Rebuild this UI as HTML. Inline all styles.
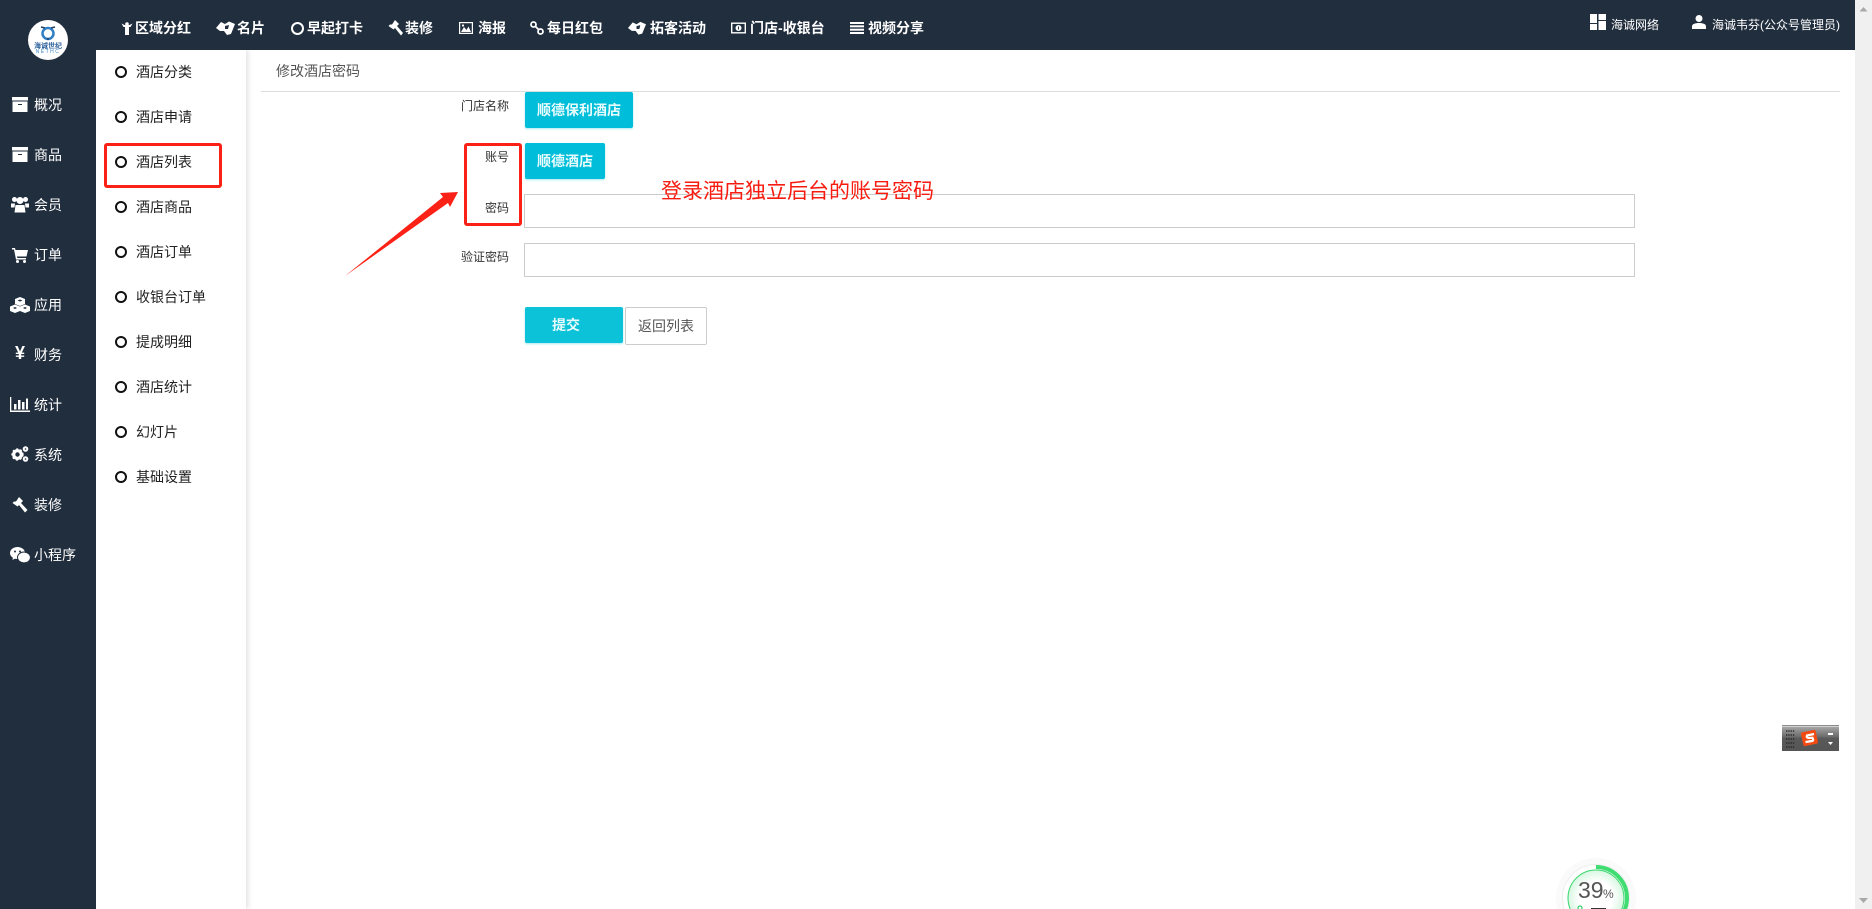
<!DOCTYPE html>
<html lang="zh-CN">
<head>
<meta charset="utf-8">
<title>修改酒店密码</title>
<style>
html,body{margin:0;padding:0;width:1872px;height:909px;overflow:hidden;background:#fff;font-family:"Liberation Sans","Noto Sans CJK SC",sans-serif;}
#p{position:relative;width:1872px;height:909px;overflow:hidden;background:#fff;}
#p>*{position:absolute;}
.t{white-space:nowrap;line-height:20px;height:20px;font-size:14px;}
.w{color:#fff;}
.b{font-weight:700;color:#fff;}
.c{width:8px;height:8px;border:2px solid #111;border-radius:50%;left:115px;}
.d{color:#222;left:136px;}
.l{color:#333;font-size:12px;text-align:right;width:80px;left:429px;}
.i{border:1px solid #ccc;background:#fff;box-sizing:border-box;left:524px;width:1111px;}
.btn{background:#00bed9;border-radius:2px;box-shadow:0 1px 2px rgba(0,190,217,.35);}
svg{display:block;overflow:visible;}
</style>
</head>
<body>
<div id="p">
<div style="left:96px;top:50px;width:150px;height:859px;background:#fff;box-shadow:2px 0 5px rgba(0,0,0,.12)"></div>
<div style="left:0;top:0;width:96px;height:909px;background:#212e3e"></div>
<div style="left:0;top:0;width:1855px;height:50px;background:#212e3e"></div>
<div style="left:1855px;top:0;width:17px;height:909px;background:#f0f0f0"></div>
<svg style="left:1855px;top:0" width="17" height="909"><path d="M4.500 11.500L8.500 7L12.500 11.500Z" fill="#a8a8a8"/><path d="M4 898H13L8.500 903Z" fill="#a8a8a8"/></svg>

<!-- logo -->
<div style="left:28px;top:20px;width:40px;height:40px;border-radius:50%;background:#fff"></div>
<svg style="left:39px;top:25px" width="18" height="16" viewBox="0 0 18 16"><circle cx="9" cy="8.500" r="5.500" fill="none" stroke="#2f7fc4" stroke-width="2.500"/><path d="M2 2L6 3M16 2L12 3M9 15V13" stroke="#1d3f66" stroke-width="1.500"/></svg>
<div class="t" style="left:33px;top:43px;width:30px;text-align:center;font-size:7px;line-height:8px;height:8px;color:#2a5f9a;font-weight:700">海诚世纪</div>
<div class="t" style="left:33px;top:49px;width:30px;text-align:center;font-size:5px;line-height:6px;height:6px;letter-spacing:1.500px;color:#3d86c8">NETHC</div>

<!-- top nav icons -->
<svg style="left:121px;top:22px" width="12" height="13" viewBox="0 0 12 13" fill="#fff"><path d="M0.500 1.500L3.500 3H8.500L11.500 1.500L9.500 5H8V13H4V5H2.500Z"/><circle cx="6" cy="2" r="1.800"/></svg>
<svg style="left:216px;top:21px" width="19" height="14" viewBox="0 0 19 14" fill="#fff"><path d="M0 7L5 1L9 3L13 0.500L19 3L15 13L11 14L8 10L4 10Z"/><path d="M9 5L13 4L12 8L9 8Z" fill="#212e3e"/></svg>
<div style="left:291px;top:22px;width:8px;height:8px;border:2px solid #fff;border-radius:50%;padding:0 1px 1px 0"></div>
<svg style="left:388px;top:20px" width="16" height="16" viewBox="0 0 16 16" fill="#fff"><path d="M7 0L11 4L9 6L15 13L13 15.500L7 8L5.500 9.500L0.500 6L2 4.500L4 4.500Z"/></svg>
<svg style="left:459px;top:22px" width="14" height="12" viewBox="0 0 14 12"><rect x=".6" y=".6" width="12.800" height="10.800" fill="none" stroke="#fff" stroke-width="1.200"/><path d="M2 10L5 5L7.500 8L9.500 4.500L12 10Z" fill="#fff"/><circle cx="4" cy="3.500" r="1.100" fill="#fff"/></svg>
<svg style="left:530px;top:21px" width="14" height="14" viewBox="0 0 14 14" fill="none" stroke="#fff" stroke-width="1.800"><circle cx="3.500" cy="3.500" r="2.500"/><circle cx="10.500" cy="10.500" r="2.500"/><path d="M5 5L9 9"/></svg>
<svg style="left:628px;top:21px" width="18" height="14" viewBox="0 0 19 14" fill="#fff"><path d="M0 7L5 1L9 3L13 0.500L19 3L15 13L11 14L8 10L4 10Z"/><path d="M9 5L13 4L12 8L9 8Z" fill="#212e3e"/></svg>
<svg style="left:731px;top:22px" width="15" height="12" viewBox="0 0 15 12"><rect x=".7" y="1.200" width="13.600" height="9.600" fill="none" stroke="#fff" stroke-width="1.400"/><circle cx="7.500" cy="6" r="3" fill="#fff"/><rect x="7" y="4.500" width="1" height="3" fill="#212e3e"/></svg>
<svg style="left:850px;top:22px" width="14" height="12" viewBox="0 0 14 12" fill="#fff"><rect y="0" width="14" height="2"/><rect y="3.300" width="14" height="2"/><rect y="6.700" width="14" height="2"/><rect y="10" width="14" height="2"/></svg>

<div class="t b" style="left:135px;top:18px">区域分红</div>
<div class="t b" style="left:237px;top:18px">名片</div>
<div class="t b" style="left:307px;top:18px">早起打卡</div>
<div class="t b" style="left:405px;top:18px">装修</div>
<div class="t b" style="left:478px;top:18px">海报</div>
<div class="t b" style="left:547px;top:18px">每日红包</div>
<div class="t b" style="left:650px;top:18px">拓客活动</div>
<div class="t b" style="left:750px;top:18px">门店-收银台</div>
<div class="t b" style="left:868px;top:18px">视频分享</div>

<!-- top right -->
<svg style="left:1590px;top:14px" width="16" height="16" viewBox="0 0 16 16" fill="#fff"><rect width="7" height="9"/><rect y="10" width="7" height="6"/><rect x="8.500" width="7.500" height="6"/><rect x="8.500" y="7" width="7.500" height="9"/></svg>
<svg style="left:1692px;top:15px" width="14" height="14" viewBox="0 0 14 14" fill="#fff"><circle cx="7" cy="3.500" r="3.500"/><path d="M0 14V11.500C0 9 3 8 7 8C11 8 14 9 14 11.500V14Z"/></svg>
<div class="t w" style="left:1611px;top:15px;font-size:12px">海诚网络</div>
<div class="t w" style="left:1712px;top:15px;font-size:12px">海诚韦芬(公众号管理员)</div>

<!-- left nav icons -->
<svg style="left:12px;top:97px" width="16" height="15" viewBox="0 0 16 15" fill="#fff"><rect width="16" height="3.500"/><path d="M0.500 4.500H15.500V15H0.500ZM6 7V8H10V7Z" fill-rule="evenodd"/></svg>
<svg style="left:12px;top:147px" width="16" height="15" viewBox="0 0 16 15" fill="#fff"><rect width="16" height="3.500"/><path d="M0.500 4.500H15.500V15H0.500ZM6 7V8H10V7Z" fill-rule="evenodd"/></svg>
<svg style="left:11px;top:196px" width="18" height="17" viewBox="0 0 18 17" fill="#fff"><circle cx="3.500" cy="3.500" r="2.500"/><circle cx="14.500" cy="3.500" r="2.500"/><circle cx="9" cy="4.500" r="3.500"/><path d="M0 7.500H4L3.500 11.500H0ZM14 7.500H18V11.500H14.500Z"/><path d="M4.500 9H13.500L14.500 16.500H3.500Z"/></svg>
<svg style="left:12px;top:248px" width="16" height="15" viewBox="0 0 16 15" fill="#fff"><path d="M0 0H3L3.500 2H16L14.500 8.500H5L5.300 10H14V11.500H4L2 1.500H0Z"/><circle cx="5.500" cy="13.500" r="1.500"/><circle cx="12.500" cy="13.500" r="1.500"/></svg>
<svg style="left:10px;top:297px" width="20" height="16" viewBox="0 0 20 16" fill="#fff"><path d="M10 0L15 2V7L10 9L5 7V2Z"/><path d="M5 7.500L10 9.500V14L5 16L0 14V9.500Z"/><path d="M15 7.500L20 9.500V14L15 16L10 14V9.500Z"/><path d="M10 2.500L12.500 3.500L10 4.500L7.500 3.500ZM5 10L7 11L5 12L3 11ZM15 10L17 11L15 12L13 11Z" fill="#212e3e"/></svg>
<div class="t" style="left:10px;top:343px;font-size:18px;font-weight:700;color:#fff;width:20px;text-align:center;line-height:20px">¥</div>
<svg style="left:10px;top:397px" width="20" height="15" viewBox="0 0 20 15" fill="#fff"><rect y="0" width="1.300" height="15"/><rect y="13.500" width="20" height="1.500"/><rect x="4" y="7" width="2.500" height="5.500"/><rect x="8" y="3" width="2.500" height="9.500"/><rect x="12" y="5" width="2.500" height="7.500"/><rect x="16" y="1.500" width="2" height="11"/></svg>
<svg style="left:11px;top:446px" width="18" height="16" viewBox="0 0 18 16"><circle cx="6.500" cy="8.500" r="3.800" fill="none" stroke="#fff" stroke-width="3.200"/><circle cx="6.500" cy="8.500" r="5.400" fill="none" stroke="#fff" stroke-width="1.500" stroke-dasharray="2 2"/><circle cx="14.500" cy="3" r="1.800" fill="none" stroke="#fff" stroke-width="2"/><circle cx="14.500" cy="13" r="1.800" fill="none" stroke="#fff" stroke-width="2"/></svg>
<svg style="left:12px;top:497px" width="16" height="16" viewBox="0 0 16 16" fill="#fff"><path d="M7 0L11 4L9 6L15.500 13L13 15.500L7 8L5.500 9.500L0.500 6L2 4.500L4 4.500Z"/></svg>
<svg style="left:10px;top:547px" width="20" height="16" viewBox="0 0 20 16" fill="#fff"><ellipse cx="7.500" cy="6" rx="7.500" ry="6"/><ellipse cx="14" cy="10.500" rx="6" ry="5"/><path d="M3 10L2.500 13L6 11ZM16 14L18 16L17.500 13Z"/><ellipse cx="14" cy="10.500" rx="6.500" ry="5.500" fill="none" stroke="#212e3e" stroke-width="1"/><circle cx="5" cy="4.500" r="1" fill="#212e3e"/><circle cx="10" cy="4.500" r="1" fill="#212e3e"/></svg>

<div class="t w" style="left:34px;top:95px">概况</div>
<div class="t w" style="left:34px;top:145px">商品</div>
<div class="t w" style="left:34px;top:195px">会员</div>
<div class="t w" style="left:34px;top:245px">订单</div>
<div class="t w" style="left:34px;top:295px">应用</div>
<div class="t w" style="left:34px;top:345px">财务</div>
<div class="t w" style="left:34px;top:395px">统计</div>
<div class="t w" style="left:34px;top:445px">系统</div>
<div class="t w" style="left:34px;top:495px">装修</div>
<div class="t w" style="left:34px;top:545px">小程序</div>

<!-- secondary nav -->
<div class="c" style="top:66px"></div><div class="t d" style="top:62px">酒店分类</div>
<div class="c" style="top:111px"></div><div class="t d" style="top:107px">酒店申请</div>
<div class="c" style="top:156px"></div><div class="t d" style="top:152px">酒店列表</div>
<div class="c" style="top:201px"></div><div class="t d" style="top:197px">酒店商品</div>
<div class="c" style="top:246px"></div><div class="t d" style="top:242px">酒店订单</div>
<div class="c" style="top:291px"></div><div class="t d" style="top:287px">收银台订单</div>
<div class="c" style="top:336px"></div><div class="t d" style="top:332px">提成明细</div>
<div class="c" style="top:381px"></div><div class="t d" style="top:377px">酒店统计</div>
<div class="c" style="top:426px"></div><div class="t d" style="top:422px">幻灯片</div>
<div class="c" style="top:471px"></div><div class="t d" style="top:467px">基础设置</div>

<!-- main -->
<div class="t" style="left:276px;top:61px;color:#555">修改酒店密码</div>
<div style="left:261px;top:91px;width:1579px;height:1px;background:#ddd"></div>

<div class="t l" style="top:96px">门店名称</div>
<div class="t l" style="top:147px">账号</div>
<div class="t l" style="top:198px">密码</div>
<div class="t l" style="top:247px">验证密码</div>

<div class="btn" style="left:525px;top:92px;width:108px;height:36px"></div>
<div class="t b" style="left:537px;top:100px;color:#e8fbfd">顺德保利酒店</div>
<div class="btn" style="left:525px;top:143px;width:80px;height:36px"></div>
<div class="t b" style="left:537px;top:151px;color:#e8fbfd">顺德酒店</div>

<div class="i" style="top:194px;height:34px"></div>
<div class="i" style="top:243px;height:34px"></div>

<div class="btn" style="left:525px;top:307px;width:98px;height:36px;background:#0bc2d8"></div>
<div class="t b" style="left:552px;top:315px;color:#e8fbfd">提交</div>
<div style="left:625px;top:307px;width:80px;height:36px;border:1px solid #ccc;border-radius:2px;background:#fff"></div>
<div class="t" style="left:638px;top:316px;color:#555">返回列表</div>

<!-- annotations -->
<div style="left:104px;top:143px;width:112px;height:39px;border:3px solid #fb2116;border-radius:3px"></div>
<div style="left:464px;top:143px;width:52px;height:77px;border:3px solid #fb2116;border-radius:3px"></div>
<svg style="left:0;top:0" width="600" height="300"><polygon points="345,276 443,197 440,193 458,192 450,207 448,203" fill="#fb2116"/></svg>
<div style="left:661px;top:178px;font-size:21px;line-height:28px;height:28px;white-space:nowrap;color:#f81c10;font-weight:400;font-family:'Liberation Sans','Noto Sans CJK SC',sans-serif">登录酒店独立后台的账号密码</div>

<!-- sogou toolbar -->
<div style="left:1782px;top:725px;width:57px;height:26px;background:linear-gradient(#8c8c8c 0,#8c8c8c 1px,#fff 1px,#a5a5a5 2px,#6a6a6a 12px,#5a5a5a 13px,#555 26px)"></div>
<svg style="left:1782px;top:725px" width="57" height="26" viewBox="0 0 57 26"><g stroke="#2a2a2a" stroke-width="1.500" stroke-dasharray="1.300 1" fill="none"><path d="M4 6H12.500M4 10H12.500M4 14H12.500M4 18H12.500M4 22H12.500"/></g><rect x="20" y="6" width="15" height="14" rx="2" transform="rotate(-12 27.500 13)" fill="#f24a12"/><path d="M32 9L25 10.500Q24 13 27 13L30.500 12.800Q32 15.500 30 16L23.500 17" fill="none" stroke="#fff" stroke-width="2.200"/><rect x="46" y="8" width="5" height="2" fill="#fff"/><path d="M46 17H51L48.500 20Z" fill="#fff"/></svg>

<!-- progress ball -->
<svg style="left:1548px;top:850px" width="96" height="59" viewBox="0 0 96 59">
<defs><radialGradient id="g"><stop offset="0.600" stop-color="#fff"/><stop offset="1" stop-color="#d8f7e2"/></radialGradient></defs>
<circle cx="48" cy="48" r="40" fill="#fafafa"/>
<circle cx="48" cy="48" r="33.500" fill="#fff" stroke="#eee" stroke-width="1"/>
<circle cx="48" cy="48" r="31" fill="none" stroke="#3fdc72" stroke-width="4" stroke-dasharray="76.500 200" transform="rotate(-90 48 48)"/>
<circle cx="48" cy="48" r="28" fill="url(#g)" stroke="#35d66a" stroke-width="1"/>
<text x="30" y="48" font-size="23" fill="#555" font-family="Liberation Sans">39</text>
<text x="55" y="48" font-size="12" fill="#555" font-family="Liberation Sans">%</text>
<circle cx="32" cy="58" r="2" fill="none" stroke="#2ecf68" stroke-width="1.200"/>
<rect x="43" y="58" width="15" height="1.500" fill="#333"/>
</svg>
</div>
</body>
</html>
